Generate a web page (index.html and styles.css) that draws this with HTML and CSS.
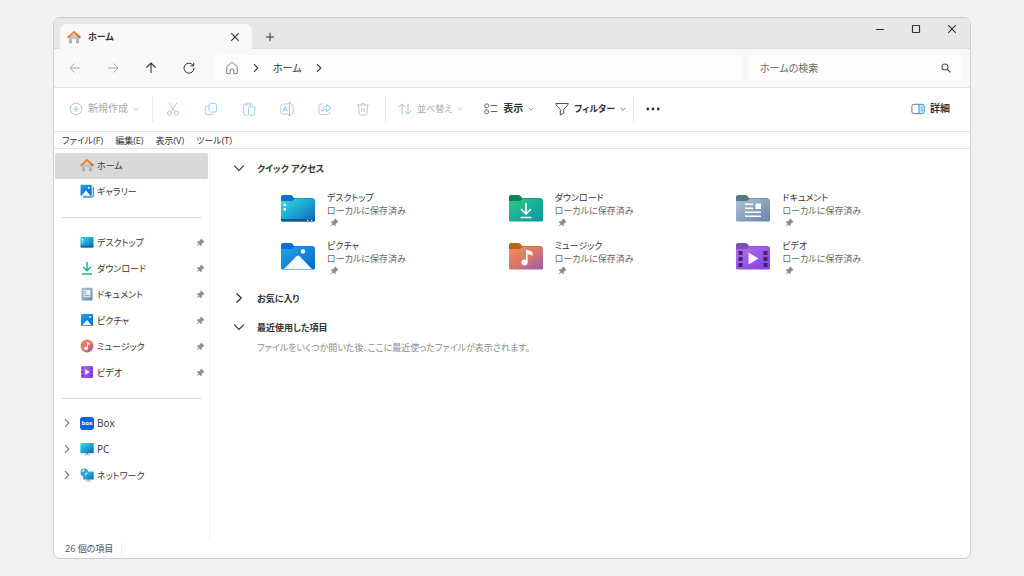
FILE: index.html
```html
<!DOCTYPE html>
<html lang="ja">
<head>
<meta charset="utf-8">
<meta name="viewport" content="width=device-width, initial-scale=1">
<title>ホーム</title>
<link rel="stylesheet" href="styles.css">
</head>
<body>
<svg class="sprite" width="0" height="0" aria-hidden="true">
  <defs>
    <linearGradient id="g-desk" x1="0" y1="0" x2="1" y2="1"><stop offset="0" stop-color="#3fdbe0"/><stop offset=".5" stop-color="#1ba5d3"/><stop offset="1" stop-color="#0f5fb8"/></linearGradient>
    <linearGradient id="g-down" x1="0" y1="0" x2="1" y2="1"><stop offset="0" stop-color="#30c983"/><stop offset="1" stop-color="#0893a6"/></linearGradient>
    <linearGradient id="g-doc" x1="0" y1="0" x2="1" y2="1"><stop offset="0" stop-color="#b0c4d6"/><stop offset="1" stop-color="#6484a8"/></linearGradient>
    <linearGradient id="g-pic" x1="0" y1="0" x2="1" y2="1"><stop offset="0" stop-color="#22a7ec"/><stop offset="1" stop-color="#0864c4"/></linearGradient>
    <linearGradient id="g-mus" x1="0" y1="0" x2="1" y2="1"><stop offset="0" stop-color="#f49150"/><stop offset=".55" stop-color="#d6746f"/><stop offset="1" stop-color="#9558b8"/></linearGradient>
    <linearGradient id="g-vid" x1="0" y1="0" x2="1" y2="1"><stop offset="0" stop-color="#b36df5"/><stop offset="1" stop-color="#8140e0"/></linearGradient>
    <linearGradient id="g-home" x1="0" y1="0" x2="0" y2="1"><stop offset="0" stop-color="#dedede"/><stop offset="1" stop-color="#a8a8a8"/></linearGradient>
    <linearGradient id="g-roof" x1="0" y1="0" x2="1" y2="1"><stop offset="0" stop-color="#f6a13a"/><stop offset="1" stop-color="#d9541e"/></linearGradient>
  </defs>
  <symbol id="home-color" viewBox="0 0 14 14"><path d="M2 6.500 7 2l5 4.500V12.500q0 .7-.7.7H9V9.500q0-.8-.8-.8H5.800q-.8 0-.8.8v3.700H2.700q-.7 0-.7-.7z" fill="url(#g-home)"/><path d="M1.200 7.200 7 1.900l5.800 5.300" fill="none" stroke="url(#g-roof)" stroke-width="1.900" stroke-linecap="round" stroke-linejoin="round"/></symbol>
  <symbol id="gallery" viewBox="0 0 14 14"><path d="M3 13h8.500q1.800 0 1.800-1.800V3" fill="none" stroke="#3b8fe0" stroke-width="1.300"/><rect x=".5" y=".8" width="11.200" height="11" rx="1" fill="url(#g-pic)"/><path d="M1.500 11.800 6 6.500l4.600 5.300z" fill="#fff"/><circle cx="8.800" cy="3.800" r="1" fill="#fff"/></symbol>
  <symbol id="desk" viewBox="0 0 14 14"><rect x=".5" y="2" width="13" height="10.500" rx="1" fill="url(#g-desk)"/><path d="M2 4h1.200v1.200H2zM2 6.400h1.200v1.200H2z" fill="#fff"/><path d="M.5 10.800h13v.7q0 1-1 1h-11q-1 0-1-1z" fill="#1464a8"/></symbol>
  <symbol id="down" viewBox="0 0 14 14"><path d="M7 1v8.500M3.200 6 7 9.700 10.800 6M2 13h10" fill="none" stroke="#20b28a" stroke-width="1.500"/></symbol>
  <symbol id="doc" viewBox="0 0 14 14"><rect x="1.500" y=".8" width="11" height="12.600" rx="1" fill="url(#g-doc)"/><path d="M3.500 2.800h7v7.500h-7z" fill="#dce6ef"/><path d="M4.300 4h2v.8h-2zM4.300 6h2v.8h-2zM4.300 8h5.400v.8H4.300z" fill="#7c97b3"/><path d="M7.300 3.600h2.500v2.800H7.300z" fill="#fff"/></symbol>
  <symbol id="pic" viewBox="0 0 14 14"><rect x="1" y="1" width="12" height="12" rx="1" fill="url(#g-pic)"/><path d="M2.200 12.300 7 7l4.800 5.300z" fill="#fff"/><circle cx="10" cy="4" r="1" fill="#fff"/></symbol>
  <symbol id="mus" viewBox="0 0 14 14"><circle cx="7" cy="7" r="6.500" fill="url(#g-mus)"/><circle cx="6" cy="9.400" r="1.700" fill="#fff"/><path d="M7 9.500V3l2.700 1.300v1.800L7.700 5.200v4.300z" fill="#fff"/></symbol>
  <symbol id="vid" viewBox="0 0 14 14"><rect x="1" y="1" width="12" height="12" rx="1" fill="url(#g-vid)"/><path d="M2 2.500h1.300v1.300H2zM2 6.300h1.300v1.300H2zM2 10h1.300v1.300H2zM10.700 2.500H12v1.300h-1.300zM10.700 6.300H12v1.300h-1.300zM10.700 10H12v1.300h-1.300z" fill="#4b1e98"/><path d="M5.300 4.300 9.700 7l-4.400 2.700z" fill="#fff"/></symbol>
  <symbol id="pc" viewBox="0 0 14 14"><path d="M6 10.500h2v2H6z" fill="#8aa0ad"/><path d="M4 12.500h6v.9H4z" fill="#a6b5be"/><rect x=".3" y="1" width="13.400" height="10.200" rx=".8" fill="url(#g-desk)"/></symbol>
  <symbol id="net" viewBox="0 0 14 14"><path d="M7.500 11h1.600v1.800H7.500z" fill="#8aa0ad"/><path d="M5.300 12.600h6v.9h-6z" fill="#a6b5be"/><rect x="3" y="3.500" width="10.700" height="8" rx=".8" fill="url(#g-desk)"/><circle cx="4.400" cy="4.400" r="3.900" fill="#3c9fca"/><path d="M1.300 3.800 3.200 1.200l1.600.7-.7 1.600-1.700.8zM5 5.200l2.600-.9-.5 2-1.700 1.200z" fill="#b9e3ef"/></symbol>
  <symbol id="pin" viewBox="0 0 10 10"><path d="M5.800.6 9.400 4.200 8.500 5 8 4.900 6.300 6.600 6.200 8.600 5.600 9.200 3.500 7.100 1 9.300.6 8.900 2.800 6.400.8 4.400l.6-.6 2-.1L5.100 2 5 1.400z" fill="currentColor"/></symbol>
  <symbol id="chev-r" viewBox="0 0 10 10"><path d="m3 1.200 3.800 3.800L3 8.800" fill="none" stroke="currentColor" stroke-width="1.100"/></symbol>
  <symbol id="chev-d" viewBox="0 0 10 10"><path d="M1 3l4 4 4-4" fill="none" stroke="currentColor"/></symbol>
  <symbol id="close" viewBox="0 0 10 10"><path d="m1.200 1.200 7.600 7.600M8.800 1.200 1.200 8.800" fill="none" stroke="currentColor" stroke-width="1.100"/></symbol>
  <symbol id="arrow-l" viewBox="0 0 12 12"><path d="M11 6H1.200M5.500 1.500 1 6l4.500 4.500" fill="none" stroke="currentColor"/></symbol>
  <symbol id="arrow-r" viewBox="0 0 12 12"><path d="M1 6h9.800M6.500 1.500 11 6l-4.500 4.500" fill="none" stroke="currentColor"/></symbol>
  <symbol id="arrow-u" viewBox="0 0 12 12"><path d="M6 11V1.200M1.500 5.500 6 1l4.500 4.500" fill="none" stroke="currentColor" stroke-width="1.100"/></symbol>
  <symbol id="folder-back" viewBox="0 0 36 30"><path d="M1 4q0-2 2-2h7.500q1 0 1.800.8L14 5h19v6L12 13H1z"/></symbol>
</svg>

<div class="window">
  <header class="titlebar">
    <div class="tab">
      <svg class="ico"><use href="#home-color"/></svg>
      <span class="tab-label">ホーム</span>
      <button class="tab-close" aria-label="タブを閉じる"><svg class="ico-s"><use href="#close"/></svg></button>
    </div>
    <button class="tab-add" aria-label="新しいタブ"><svg class="ico-s" viewBox="0 0 10 10"><path d="M5 .8v8.400M.8 5h8.400" fill="none" stroke="currentColor"/></svg></button>
    <div class="controls">
      <button aria-label="最小化"><svg class="ico-s" viewBox="0 0 10 10"><path d="M1 5.500h8" stroke="currentColor"/></svg></button>
      <button aria-label="最大化"><svg class="ico-s" viewBox="0 0 10 10"><rect x="1.500" y="1.500" width="7" height="7" rx=".5" fill="none" stroke="currentColor" stroke-width="1.200"/></svg></button>
      <button aria-label="閉じる"><svg class="ico-s"><use href="#close"/></svg></button>
    </div>
  </header>

  <div class="navbar">
    <button class="nav-btn off" aria-label="戻る"><svg class="ico-m"><use href="#arrow-l"/></svg></button>
    <button class="nav-btn off" aria-label="進む"><svg class="ico-m"><use href="#arrow-r"/></svg></button>
    <button class="nav-btn" aria-label="上へ"><svg class="ico-m"><use href="#arrow-u"/></svg></button>
    <button class="nav-btn" aria-label="更新"><svg class="ico-m" viewBox="0 0 12 12"><path d="M10.300 3.600A5 5 0 1 0 11 6M10.700.8v3.100H7.600" fill="none" stroke="currentColor"/></svg></button>
    <nav class="crumbs" aria-label="場所">
      <svg class="ico" viewBox="0 0 14 14"><path d="M1.700 6.300q0-.6.500-1L6.300 1.700q.7-.6 1.400 0l4.100 3.600q.5.400.5 1v5.400q0 1-1 1H9.700q-.9 0-.9-.9V9q0-.8-.8-.8H6q-.8 0-.8.800v2.800q0 .9-.9.9H2.700q-1 0-1-1z" fill="none" stroke="#777"/></svg>
      <svg class="ico-s"><use href="#chev-r"/></svg>
      <a href="#">ホーム</a>
      <svg class="ico-s"><use href="#chev-r"/></svg>
    </nav>
    <label class="search">
      <input type="text" placeholder="ホームの検索" aria-label="ホームの検索">
      <svg class="ico-s" viewBox="0 0 10 10"><circle cx="4" cy="4" r="3" fill="none" stroke="currentColor" stroke-width="1.100"/><path d="m6.200 6.200 3.200 3.200" stroke="currentColor" stroke-width="1.300"/></svg>
    </label>
  </div>

  <div class="toolbar">
    <button class="tool off new"><svg class="ico" viewBox="0 0 14 14" fill="none"><circle cx="7" cy="7" r="5.800" stroke="#c4c4c4"/><path d="M7 4.300v5.400M4.300 7h5.400" stroke="#8fc8ef"/></svg><span>新規作成</span><svg class="ico-xs"><use href="#chev-d"/></svg></button>
    <i class="divider"></i>
    <div class="icon-tools">
      <button aria-label="切り取り"><svg class="ico" viewBox="0 0 14 14" fill="none"><path d="M3 .8 8.800 9.600M11 .8 5.200 9.600" stroke="#c4c4c4"/><circle cx="3.500" cy="11" r="2" stroke="#9dd0f3"/><circle cx="10.500" cy="11" r="2" stroke="#9dd0f3"/></svg></button>
      <button aria-label="コピー"><svg class="ico" viewBox="0 0 14 14" fill="none"><path d="M4.500 4H3Q1.200 4 1.200 5.800v5Q1.200 12.600 3 12.600h4.500q1.300 0 1.700-1.300" stroke="#c8c8c8"/><rect x="5" y="1.500" width="7.500" height="8.500" rx="1.600" stroke="#9dd0f3"/></svg></button>
      <button aria-label="貼り付け"><svg class="ico" viewBox="0 0 14 14" fill="none"><path d="M5.500 13H3q-1.500 0-1.500-1.500v-8Q1.500 2 3 2h1m4.500 0h1Q11 2 11 3.500M4 1h4.500v2H4z" stroke="#c8c8c8"/><rect x="6.500" y="4.800" width="6.300" height="8.400" rx="1.300" stroke="#9dd0f3"/></svg></button>
      <button aria-label="名前の変更"><svg class="ico" viewBox="0 0 14 14" fill="none"><path d="M8 2H3Q.8 2 .8 4.200v5.600Q.8 12 3 12h5m3-10q2.200 0 2.200 2.200v5.600Q13.200 12 11 12" stroke="#c8c8c8"/><path d="m3 9.500 2.200-5 2.200 5M3.700 8h3M9.500.8v12.400M8 .8h3M8 13.200h3" stroke="#8fc8ef"/></svg></button>
      <button aria-label="共有"><svg class="ico" viewBox="0 0 14 14" fill="none"><path d="M5.500 2H3Q1 2 1 4v6.500q0 2 2 2h7q2 0 2-2V10" stroke="#c8c8c8"/><path d="M3.800 9.200q.5-4.200 4.700-4.200V2.500L13 6.300 8.500 9.800V7.300q-3 0-4.700 1.900z" stroke="#8fc8ef"/></svg></button>
      <button aria-label="削除"><svg class="ico" viewBox="0 0 14 14" fill="none"><path d="M1.200 3h11.600M5 3q0-1.800 2-1.800T9 3M2.400 3l.8 8.500q.1 1.500 1.600 1.500h4.400q1.500 0 1.600-1.500l.8-8.500M5.800 6v4M8.200 6v4" stroke="#c4c4c4"/></svg></button>
    </div>
    <i class="divider"></i>
    <button class="tool off kana"><svg class="ico" viewBox="0 0 14 14" fill="none"><path d="M4 12.200V2M1 5l3-3.200L7 5" stroke="#bdbdbd"/><path d="M10 1.800V12M7 9l3 3.200L13 9" stroke="#8fc8ef"/></svg><span>並べ替え</span><svg class="ico-xs"><use href="#chev-d"/></svg></button>
    <button class="tool"><svg class="ico" viewBox="0 0 14 14" fill="none" stroke="#666"><rect x=".8" y="2" width="3.600" height="3.600" rx="1"/><rect x=".8" y="8" width="3.600" height="3.600" rx="1"/><path d="M6.700 3.500h6.600M6.700 9.500h6.600"/></svg><span>表示</span><svg class="ico-xs"><use href="#chev-d"/></svg></button>
    <button class="tool kana filter"><svg class="ico" viewBox="0 0 14 14" fill="none"><path d="M.8 1.500h12.400q-.2 1.400-1.200 2.400L8.700 7.300v4L5.300 13V7.300L2 3.900Q1 2.900.8 1.500z" stroke="#555" stroke-linejoin="round"/></svg><span>フィルター</span><svg class="ico-xs"><use href="#chev-d"/></svg></button>
    <i class="divider"></i>
    <button class="more" aria-label="もっと見る"><svg class="ico" viewBox="0 0 14 14" fill="#333"><circle cx="1.800" cy="7" r="1.400"/><circle cx="7" cy="7" r="1.400"/><circle cx="12.200" cy="7" r="1.400"/></svg></button>
    <button class="tool details"><svg class="ico" viewBox="0 0 14 14" fill="none"><path d="M8 2.300H3Q.9 2.300.9 4.400v5.200q0 2.100 2.100 2.100h5" stroke="#777"/><path d="M8 2.300h3q2.200 0 2.200 2.100v5.200q0 2.100-2.200 2.100H8z" fill="#d9effd" stroke="#2f95dd"/><path d="M9.700 5.300h2M9.700 7h2M9.700 8.700h2" stroke="#2f95dd" stroke-width=".8"/></svg><span>詳細</span></button>
  </div>

  <div class="menubar">
    <button>ファイル(F)</button>
    <button>編集(E)</button>
    <button>表示(V)</button>
    <button>ツール(T)</button>
  </div>

  <div class="body">
    <nav class="sidebar" aria-label="ナビゲーション">
      <ul>
        <li class="current"><a href="#"><svg class="ico"><use href="#home-color"/></svg>ホーム</a></li>
        <li><a href="#"><svg class="ico"><use href="#gallery"/></svg>ギャラリー</a></li>
      </ul>
      <hr>
      <ul>
        <li><a href="#"><svg class="ico"><use href="#desk"/></svg>デスクトップ</a><svg class="pin"><use href="#pin"/></svg></li>
        <li><a href="#"><svg class="ico"><use href="#down"/></svg>ダウンロード</a><svg class="pin"><use href="#pin"/></svg></li>
        <li><a href="#"><svg class="ico"><use href="#doc"/></svg>ドキュメント</a><svg class="pin"><use href="#pin"/></svg></li>
        <li><a href="#"><svg class="ico"><use href="#pic"/></svg>ピクチャ</a><svg class="pin"><use href="#pin"/></svg></li>
        <li><a href="#"><svg class="ico"><use href="#mus"/></svg>ミュージック</a><svg class="pin"><use href="#pin"/></svg></li>
        <li><a href="#"><svg class="ico"><use href="#vid"/></svg>ビデオ</a><svg class="pin"><use href="#pin"/></svg></li>
      </ul>
      <hr>
      <ul class="tree">
        <li><button aria-label="Box を展開"><svg class="ico-s"><use href="#chev-r"/></svg></button><a class="latin" href="#"><span class="box-logo">box</span>Box</a></li>
        <li><button aria-label="PC を展開"><svg class="ico-s"><use href="#chev-r"/></svg></button><a class="latin" href="#"><svg class="ico"><use href="#pc"/></svg>PC</a></li>
        <li><button aria-label="ネットワーク を展開"><svg class="ico-s"><use href="#chev-r"/></svg></button><a href="#"><svg class="ico"><use href="#net"/></svg>ネットワーク</a></li>
      </ul>
    </nav>

    <main class="content">
      <section>
        <h2><button><svg class="ico-m"><use href="#chev-d"/></svg>クイック アクセス</button></h2>
        <div class="tiles">
          <a class="tile" href="#">
            <svg class="folder" viewBox="0 0 36 30"><use href="#folder-back" fill="#0c6fcf"/><path d="M1 8h11l3-2.500h18.500q1.500 0 1.500 1.500v20q0 1.500-1.500 1.500h-31Q1 28.500 1 27z" fill="url(#g-desk)"/><path d="M1 26h34v1q0 1.500-1.500 1.500h-31Q1 28.500 1 27z" fill="#0c5598"/><path d="M3.500 10.500H6V13H3.500zM3.500 15H6v2.500H3.500z" fill="#fff"/><path d="M27 26.700h1.500V28H27zM31 26.700h1.500V28H31z" fill="#bfe9f8"/></svg>
            <span class="info"><b>デスクトップ</b><small>ローカルに保存済み</small><svg class="pin"><use href="#pin"/></svg></span>
          </a>
          <a class="tile" href="#">
            <svg class="folder" viewBox="0 0 36 30"><use href="#folder-back" fill="#0c8457"/><path d="M1 8h11l3-2.500h18.500q1.500 0 1.500 1.500v20q0 1.500-1.500 1.500h-31Q1 28.500 1 27z" fill="url(#g-down)"/><path d="M18 10v10.500M13 16l5 5 5-5M12.500 24.500h11" fill="none" stroke="#fff" stroke-width="1.600"/></svg>
            <span class="info"><b>ダウンロード</b><small>ローカルに保存済み</small><svg class="pin"><use href="#pin"/></svg></span>
          </a>
          <a class="tile" href="#">
            <svg class="folder" viewBox="0 0 36 30"><use href="#folder-back" fill="#567887"/><path d="M1 8h11l3-2.500h18.500q1.500 0 1.500 1.500v20q0 1.500-1.500 1.500h-31Q1 28.500 1 27z" fill="url(#g-doc)"/><path d="M10 10.500h8v1.500h-8zM10 14.500h8V16h-8zM10 18.500h16V20H10zM10 22.500h16V24H10zM20.500 10.500H26V16h-5.500z" fill="#fff"/></svg>
            <span class="info"><b>ドキュメント</b><small>ローカルに保存済み</small><svg class="pin"><use href="#pin"/></svg></span>
          </a>
          <a class="tile" href="#">
            <svg class="folder" viewBox="0 0 36 30"><use href="#folder-back" fill="#0c6fcf"/><path d="M1 8h11l3-2.500h18.500q1.500 0 1.500 1.500v20q0 1.500-1.500 1.500h-31Q1 28.500 1 27z" fill="url(#g-pic)"/><path d="M4 28 16.500 15.300q1.500-1.500 3 0L32 28z" fill="#f2f9ff"/><circle cx="23" cy="10.500" r="2.200" fill="#fff"/></svg>
            <span class="info"><b>ピクチャ</b><small>ローカルに保存済み</small><svg class="pin"><use href="#pin"/></svg></span>
          </a>
          <a class="tile" href="#">
            <svg class="folder" viewBox="0 0 36 30"><use href="#folder-back" fill="#bd6216"/><path d="M1 8h11l3-2.500h18.500q1.500 0 1.500 1.500v20q0 1.500-1.500 1.500h-31Q1 28.500 1 27z" fill="url(#g-mus)"/><circle cx="16.500" cy="21.500" r="3" fill="#fff"/><path d="M18 21.500V8.500l6.500 2.500v3.500L19.500 13v8.500z" fill="#fff"/></svg>
            <span class="info"><b>ミュージック</b><small>ローカルに保存済み</small><svg class="pin"><use href="#pin"/></svg></span>
          </a>
          <a class="tile" href="#">
            <svg class="folder" viewBox="0 0 36 30"><use href="#folder-back" fill="#7a51b8"/><path d="M1 8h11l3-2.500h18.500q1.500 0 1.500 1.500v20q0 1.500-1.500 1.500h-31Q1 28.500 1 27z" fill="url(#g-vid)"/><path d="M3.500 10h4v4h-4zM3.500 16h4v4h-4zM3.500 22h4v4h-4zM28.500 10h4v4h-4zM28.500 16h4v4h-4zM28.500 22h4v4h-4z" fill="#432368"/><path d="M13.500 11.500 23.500 17.500l-10 6z" fill="#f8f3ff"/></svg>
            <span class="info"><b>ビデオ</b><small>ローカルに保存済み</small><svg class="pin"><use href="#pin"/></svg></span>
          </a>
        </div>
      </section>
      <section>
        <h2><button><svg class="ico-m"><use href="#chev-r"/></svg>お気に入り</button></h2>
      </section>
      <section>
        <h2><button><svg class="ico-m"><use href="#chev-d"/></svg>最近使用した項目</button></h2>
        <p>ファイルをいくつか開いた後、ここに最近使ったファイルが表示されます。</p>
      </section>
    </main>
  </div>

  <footer class="status"><span>26 個の項目</span></footer>
</div>
</body>
</html>
```

FILE: styles.css
```css
* {
  box-sizing: border-box;
}

body {
  margin: 0;
  min-height: 100vh;
  padding: 17px 53px;
  display: flex;
  background: #f1f1f1;
  color: #333;
  font-family: "Open Sans", "Noto Sans CJK JP", sans-serif;
  font-size: 9px;
  line-height: 13px;
  font-feature-settings: "palt";
}

button,
input {
  font: inherit;
  font-feature-settings: inherit;
  color: inherit;
  border: 0;
  padding: 0;
  background: none;
}

a {
  color: inherit;
  text-decoration: none;
}

button,
a,
span {
  white-space: nowrap;
}

ul {
  list-style: none;
  margin: 0;
  padding: 0;
}

svg {
  display: block;
  flex: none;
}

.sprite {
  position: absolute;
}

.ico {
  width: 14px;
  height: 14px;
}

.ico-m {
  width: 12px;
  height: 12px;
}

.ico-s {
  width: 10px;
  height: 10px;
}

.ico-xs {
  width: 6px;
  height: 6px;
}

.window {
  flex: 1;
  min-width: 0;
  display: flex;
  flex-direction: column;
  background: #fff;
  border: 1px solid #cecece;
  border-radius: 7px;
  overflow: hidden;
}

/* Title bar */
.titlebar {
  display: flex;
  height: 31px;
  background: #e7e7e7;
  border-bottom: 1px solid #dedede;
}

.tab {
  display: flex;
  align-items: center;
  gap: 7px;
  width: 192px;
  margin: 6px 0 -1px 6px;
  padding: 0 12px 0 7px;
  background: #f8f8f8;
  border-radius: 7px 7px 0 0;
}

.tab-label {
  font-weight: 700;
}

.tab-close {
  margin-left: auto;
}

.tab-add {
  padding: 7px 13px 0;
}

.controls {
  display: flex;
  margin-left: auto;
}

.controls button {
  width: 36px;
  display: flex;
  justify-content: center;
  padding-top: 6px;
}

/* Address row */
.navbar {
  display: flex;
  align-items: center;
  height: 39px;
  padding: 0 8px 0 2px;
  background: #f8f8f8;
  border-bottom: 1px solid #e5e5e5;
  font-size: 10px;
}

.nav-btn {
  width: 38px;
  display: flex;
  justify-content: center;
}

.nav-btn.off {
  color: #aaa;
}

.crumbs,
.search {
  display: flex;
  align-items: center;
  height: 26px;
  background: #fdfdfd;
  border-radius: 4px;
}

.crumbs {
  flex: 1;
  gap: 12px;
  margin: 0 6px 0 7px;
  padding: 0 10px;
}

.search {
  width: 214px;
  padding: 0 11px 0 12px;
  color: #555;
}

.search input {
  flex: 1;
  min-width: 0;
  outline: 0;
}

.search input::placeholder {
  color: #666;
}

/* Command bar */
.toolbar {
  display: flex;
  align-items: center;
  height: 44px;
  padding: 0 20px 2px 15px;
  border-bottom: 1px solid #e5e5e5;
  font-size: 10px;
}

.tool {
  display: flex;
  align-items: center;
  gap: 5px;
  margin-right: 21px;
}

.tool span {
  font-weight: 700;
}

.tool.kana {
  font-size: 9px;
}

.tool.off {
  color: #aaa;
}

.tool.off span {
  font-weight: 400;
}

.tool.new {
  margin-right: 13px;
}

.tool.filter {
  margin-right: 7px;
}

.divider {
  width: 1px;
  height: 26px;
  background: #ececec;
}

.icon-tools {
  display: flex;
  padding: 0 3px 0 1px;
}

.icon-tools button {
  width: 38px;
  display: flex;
  justify-content: center;
}

.divider + .tool {
  margin-left: 12px;
}

.more {
  margin-left: 12px;
}

.details {
  margin: 0 0 0 auto;
}

/* Menu bar */
.menubar {
  display: flex;
  gap: 12px;
  height: 17px;
  padding: 0 8px;
  border-bottom: 1px solid #e5e5e5;
}

/* Sidebar */
.body {
  flex: 1;
  display: flex;
}

.sidebar {
  width: 156px;
  padding: 4px 1px;
  border-right: 1px solid #f3f3f3;
}

.sidebar li {
  display: flex;
  align-items: center;
  height: 26px;
  padding: 0 3px 2px 25px;
}

.sidebar a {
  flex: 1;
  display: flex;
  align-items: center;
  gap: 3px;
}

.sidebar .latin {
  font-size: 10px;
}

.sidebar .current {
  background: #d9d9d9;
  border-radius: 2px;
}

.sidebar hr {
  height: 1px;
  margin: 12px 7px;
  border: 0;
  background: #dcdcdc;
}

.sidebar .tree li {
  padding-left: 7px;
}

.tree button {
  margin-right: 8px;
  color: #777;
}

.pin {
  width: 9px;
  height: 9px;
  color: #87929c;
}

.box-logo {
  width: 14px;
  height: 13px;
  border-radius: 3px;
  background: #0b63d8;
  color: #fff;
  font-size: 6px;
  font-weight: 700;
  line-height: 12px;
  text-align: center;
}

/* Content */
.content {
  flex: 1;
  min-width: 0;
  padding: 11px 7px 0 23px;
}

h2 {
  margin: 0;
  font-size: 9px;
}

h2 button {
  display: flex;
  align-items: center;
  gap: 12px;
  height: 16px;
}

.tiles {
  display: grid;
  grid-template-columns: repeat(3, 1fr);
  row-gap: 12px;
  margin: 15px 0 15px 47px;
}

.tile {
  display: flex;
  align-items: flex-start;
  gap: 11px;
}

.folder {
  width: 36px;
  height: 30px;
  margin-top: 2px;
}

.info {
  display: flex;
  flex-direction: column;
}

.info b {
  font-weight: 400;
}

.info small {
  font-size: 9px;
  color: #666;
}

.info .pin {
  margin: 1px 3px 0;
  color: #8a8a8a;
}

section + section {
  margin-bottom: 13px;
}

section p {
  margin: 6px 0 0 24px;
  color: #8c8c8c;
}

/* Status bar */
.status {
  display: flex;
  height: 18px;
  padding: 2px 11px;
  color: #44546a;
}

.status span {
  padding-right: 8px;
  border-right: 1px solid #f1f1f1;
}
```
